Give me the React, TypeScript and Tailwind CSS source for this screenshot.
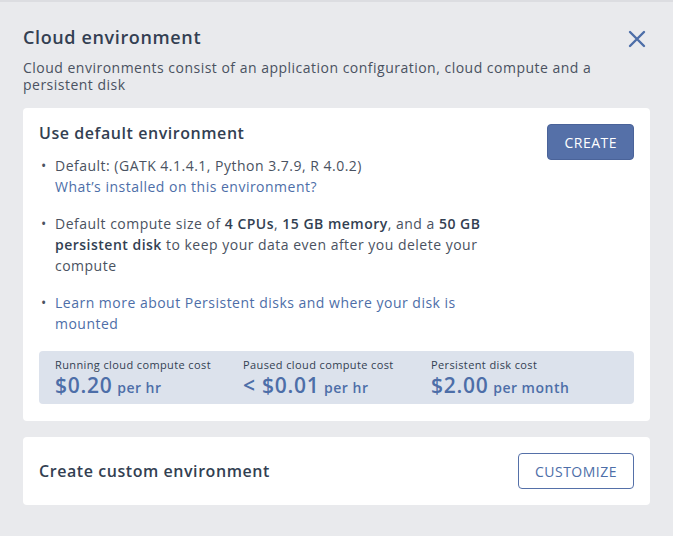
import React from 'react';

interface CostItem {
  label: string;
  price: string;
  unit: string;
}

const costs: CostItem[] = [
  { label: 'Running cloud compute cost', price: '$0.20', unit: 'per hr' },
  { label: 'Paused cloud compute cost', price: '< $0.01', unit: 'per hr' },
  { label: 'Persistent disk cost', price: '$2.00', unit: 'per month' },
];

function CloseIcon() {
  return (
    <svg width="18" height="18" viewBox="0 0 18 18" fill="none">
      <path d="M2 2 L16 16 M16 2 L2 16" stroke="#4d6ea8" strokeWidth="2.4" strokeLinecap="round" />
    </svg>
  );
}

export default function App() {
  return (
    <div className="w-[673px] h-[536px] bg-[#e9eaed] border-t-2 border-[#dcdde1] text-[#333f52] font-['Open_Sans',sans-serif] [&_*]:tracking-[0.035em] px-[23px] pt-[22px]">
      {/* Header */}
      <div className="flex justify-between items-start">
        <h1 className="text-[18px] font-semibold leading-[26px]">Cloud environment</h1>
        <button className="mt-[6px] mr-[4px]">
          <CloseIcon />
        </button>
      </div>
      <p className="text-[14px] leading-[17px] mt-[9px] pr-[40px] text-[#4a5261]">
        Cloud environments consist of an application configuration, cloud compute and a persistent disk
      </p>

      {/* Default environment card */}
      <div className="bg-white rounded-[4px] mt-[15px] px-[16px] pt-[14px] pb-[17px]">
        <div className="flex justify-between">
          <div className="w-[456px]">
            <h2 className="text-[16px] font-semibold leading-[22px]">Use default environment</h2>
            <ul className="mt-[11px] text-[14px] leading-[21px] text-[#4a5261] space-y-[16px]">
              <li className="flex">
                <span className="w-[16px] shrink-0 pl-[2px]">•</span>
                <div>
                  Default: (GATK 4.1.4.1, Python 3.7.9, R 4.0.2)
                  <br />
                  <a className="text-[#4d6ea8]">What’s installed on this environment?</a>
                </div>
              </li>
              <li className="flex">
                <span className="w-[16px] shrink-0 pl-[2px]">•</span>
                <div>
                  Default compute size of <b className="font-semibold text-[#333f52]">4 CPUs</b>,{' '}
                  <b className="font-semibold text-[#333f52]">15 GB memory</b>, and a{' '}
                  <b className="font-semibold text-[#333f52]">50 GB persistent disk</b> to keep your data even after you
                  delete your compute
                </div>
              </li>
              <li className="flex">
                <span className="w-[16px] shrink-0 pl-[2px]">•</span>
                <a className="text-[#4d6ea8]">Learn more about Persistent disks and where your disk is mounted</a>
              </li>
            </ul>
          </div>
          <button className="self-start mt-[2px] h-[36px] px-[16px] rounded-[4px] bg-[#5570a8] border border-[#4a6399] text-white text-[14px]">
            CREATE
          </button>
        </div>

        <div className="mt-[17px] bg-[#dce2ec] rounded-[4px] px-[16px] pt-[6px] pb-[4px] grid grid-cols-[188px_188px_1fr]">
          {costs.map((c) => (
            <div key={c.label}>
              <div className="text-[11px] leading-[16px] text-[#333f52]">{c.label}</div>
              <div className="leading-[24px] text-[#4d6ea8] font-semibold">
                <span className="text-[21px]">{c.price}</span>{' '}
                <span className="text-[14px]">{c.unit}</span>
              </div>
            </div>
          ))}
        </div>
      </div>

      {/* Custom environment card */}
      <div className="bg-white rounded-[4px] mt-[16px] px-[16px] h-[68px] flex items-center justify-between">
        <h2 className="text-[16px] font-semibold">Create custom environment</h2>
        <button className="h-[36px] px-[16px] rounded-[4px] border border-[#5570a8] text-[#4d6ea8] text-[14px]">
          CUSTOMIZE
        </button>
      </div>
    </div>
  );
}
